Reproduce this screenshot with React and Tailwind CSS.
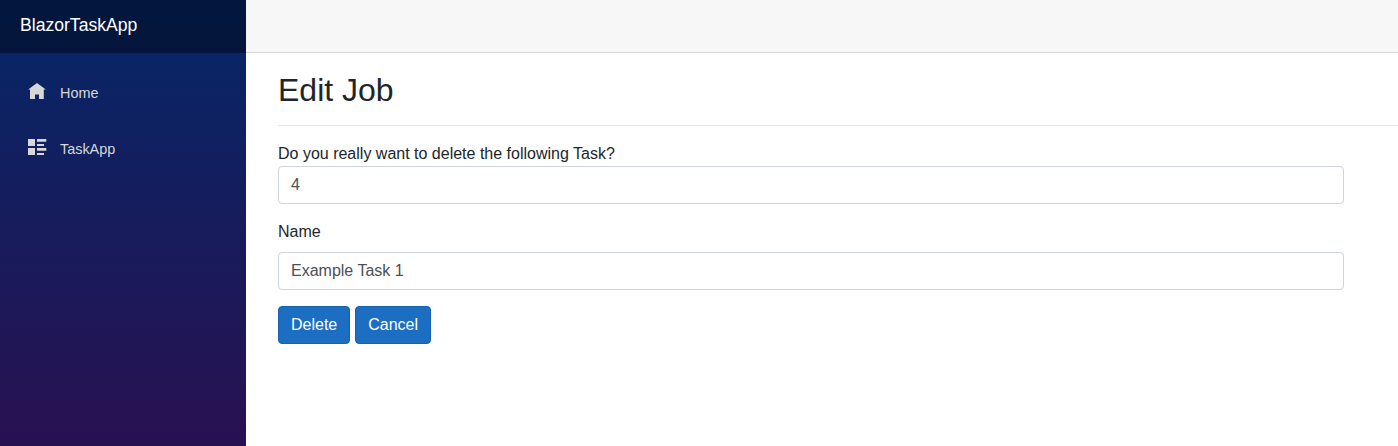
const navItems = [
  {
    label: "Home",
    path: "M9 0L0.2 6.6H2V16H7V11.5H11V16H15.8V6.6H17.8L9 0Z",
  },
  {
    label: "TaskApp",
    path: "M0 0h7v7h-7zM9 0h9.3v2.8h-9.3zM9 5h7v2h-7zM0 9h7v7h-7zM9 9h9.3v2.8h-9.3zM9 14h7v2h-7z",
  },
];

function NavItem({ label, path }) {
  return (
    <a href="#" className="flex h-10 items-center rounded px-4 text-[14.4px] text-[#d7d7d7]">
      <svg viewBox="0 0 19 16" className="mb-1 mr-[13px] h-4 w-[19px] shrink-0" fill="currentColor">
        <path d={path} />
      </svg>
      <span className="pt-[2px]">{label}</span>
    </a>
  );
}

function Field({ value }) {
  return (
    <input
      readOnly
      value={value}
      className="block h-[38px] w-[1066px] rounded border border-[#ced4da] bg-white px-3 py-1.5 text-base leading-6 text-[#495057] outline-none"
    />
  );
}

function Button({ children }) {
  return (
    <button className="h-[38px] rounded border border-[#1861ac] bg-[#1b6ec2] px-3 py-1.5 text-base leading-6 text-white">
      {children}
    </button>
  );
}

export default function App() {
  return (
    <div className="flex h-screen overflow-hidden bg-white font-['Liberation_Sans',Arial,sans-serif] text-base text-[#212529]">
      <aside className="h-full w-[246px] shrink-0 bg-[linear-gradient(180deg,#052767_0px,#3a0647_665px)]">
        <div className="flex h-[53px] items-center bg-black/40 pb-[3px] pl-5 text-[17.6px] text-white">
          BlazorTaskApp
        </div>
        <nav className="flex flex-col gap-4 px-3 pt-5">
          {navItems.map((item) => (
            <NavItem key={item.label} {...item} />
          ))}
        </nav>
      </aside>
      <main className="min-w-0 flex-1">
        <div className="h-[53px] border-b border-[#d6d5d5] bg-[#f7f7f7]" />
        <div className="pl-8 pt-[18px]">
          <h2 className="h-[38px] text-[32px] leading-[38px]">Edit Job</h2>
          <hr className="my-4 border-t border-black/10" />
          <p className="leading-6">Do you really want to delete the following Task?</p>
          <Field value="4" />
          <p className="mb-2 mt-4 leading-6">Name</p>
          <Field value="Example Task 1" />
          <div className="mt-4 flex gap-[5px]">
            <Button>Delete</Button>
            <Button>Cancel</Button>
          </div>
        </div>
      </main>
    </div>
  );
}
